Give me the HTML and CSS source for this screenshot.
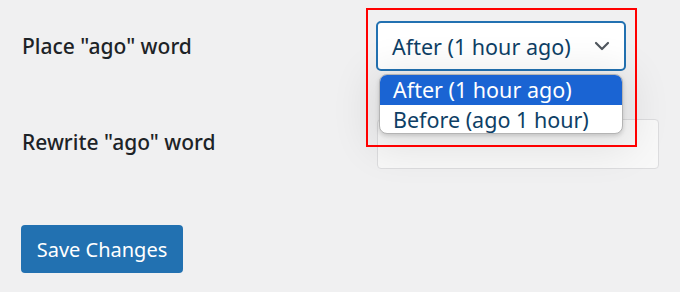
FILE: index.html
```html
<!DOCTYPE html>
<html lang="en">
<head>
<meta charset="utf-8">
<title>Settings</title>
<link rel="stylesheet" href="styles.css">
</head>
<body>
<div class="page">
  <div class="row row-first">
    <div class="label">Place "ago" word</div>
    <div class="field">
      <div class="select">
        <span class="select-text">After (1 hour ago)</span>
        <svg class="chev" width="16" height="10" viewBox="0 0 16 10"><path d="M2 2 L8 8 L14 2" fill="none" stroke="#50575e" stroke-width="2.2" stroke-linecap="round" stroke-linejoin="round"/></svg>
      </div>
    </div>
  </div>
  <div class="row row-second">
    <div class="label">Rewrite "ago" word</div>
    <div class="field">
      <div class="input"></div>
    </div>
  </div>
  <div class="actions">
    <button class="btn">Save Changes</button>
  </div>

  <div class="dropdown">
    <div class="opt opt-active">After (1 hour ago)</div>
    <div class="opt">Before (ago 1 hour)</div>
  </div>
  <div class="highlight"></div>
</div>
</body>
</html>
```
FILE: styles.css
```css
html, body {
  margin: 0;
  padding: 0;
  background: #f0f0f1;
}
body {
  width: 680px;
  height: 292px;
  overflow: hidden;
  font-family: "Noto Sans", "Open Sans", sans-serif;
  color: #1d2327;
}
.page {
  position: relative;
  height: 292px;
  padding: 21px 0 0 21px;
  box-sizing: border-box;
}
.row {
  display: flex;
  align-items: center;
}
.row-second {
  margin-top: 48px;
}
.label {
  width: 355px;
  font-size: 21px;
  font-weight: 500;
  color: #1d2327;
  padding-left: 1px;
  box-sizing: border-box;
}
.row-second .label {
  margin-top: -4px;
}
.field {
  flex: none;
}
.select {
  width: 250px;
  height: 50px;
  box-sizing: border-box;
  border: 2px solid #2271b1;
  border-radius: 5px;
  background: #fff;
  display: flex;
  align-items: center;
  justify-content: space-between;
  padding: 0 14px 0 14px;
  color: #0e3f66;
  font-size: 21.5px;
}
.chev {
  display: block;
}
.row-second .field {
  margin-left: 1px;
}
.input {
  width: 282px;
  height: 50px;
  box-sizing: border-box;
  border: 1px solid #dcdcde;
  border-radius: 4px;
  background: #f8f8f8;
}
.actions {
  margin-top: 56px;
}
.btn {
  display: block;
  width: 162px;
  height: 48px;
  border: 0;
  border-radius: 4px;
  background: #2271b1;
  color: #fff;
  font-family: "Noto Sans", "Open Sans", sans-serif;
  font-size: 20px;
  padding: 0;
}
.dropdown {
  position: absolute;
  left: 379px;
  top: 74px;
  width: 244px;
  height: 60px;
  box-sizing: border-box;
  background: #fff;
  border: 1px solid #b4b4b4;
  border-radius: 8px;
  overflow: hidden;
  box-shadow: 0 6px 40px 10px rgba(0, 0, 0, 0.09), 0 2px 4px rgba(0, 0, 0, 0.15);
}
.opt {
  height: 29px;
  line-height: 29px;
  padding-left: 13px;
  font-size: 21.5px;
  color: #0e3f66;
  white-space: nowrap;
}
.opt-active {
  height: 30px;
  line-height: 30px;
  background: #1a64d3;
  color: #fff;
}
.highlight {
  position: absolute;
  left: 366px;
  top: 8px;
  width: 271px;
  height: 139px;
  box-sizing: border-box;
  border: 2px solid #f00;
}
```
